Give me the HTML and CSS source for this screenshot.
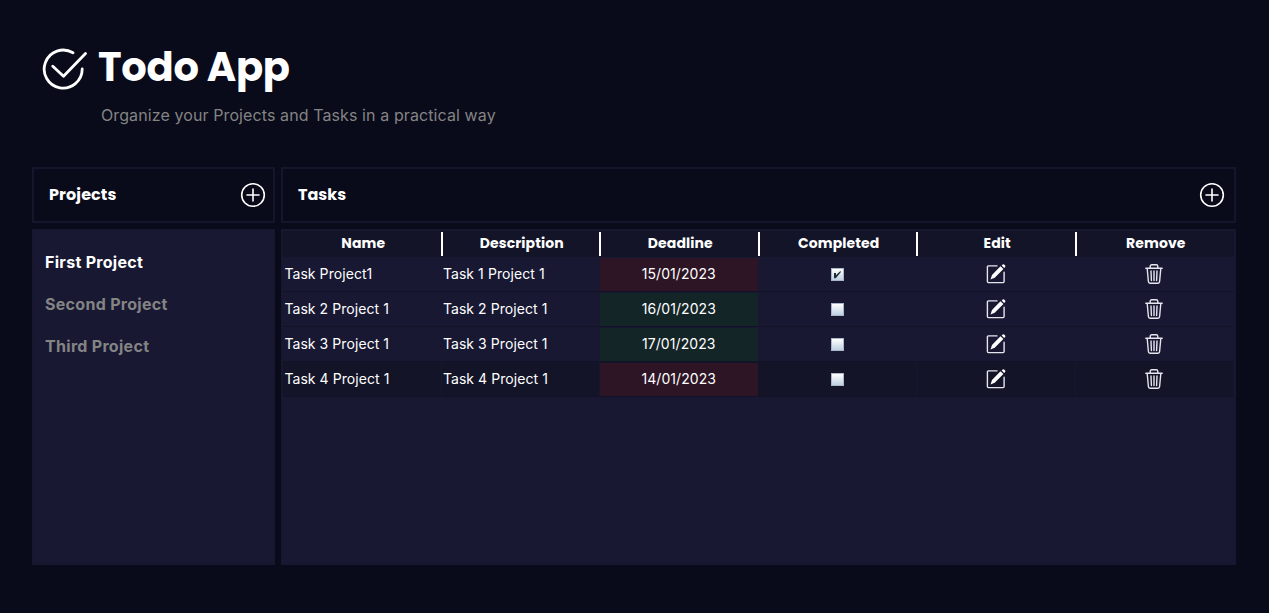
FILE: index.html
```html
<!DOCTYPE html>
<html lang="en">
<head>
<meta charset="utf-8">
<title>Todo App</title>
<link rel="stylesheet" href="styles.css">
</head>
<body>
<svg class="sprite" width="0" height="0">
  <symbol id="add" viewBox="0 0 26 26"><circle cx="13" cy="13" r="11.3"/><path d="M13 7v12M7 13h12"/></symbol>
  <symbol id="edit" viewBox="0 0 20 20"><path d="M11 1.9H2.4Q1.4 1.9 1.4 2.9v14.7q0 1 1 1h14.7q1 0 1-1V8.2"/><path class="solid" d="M14.5 2.2l2.9 2.9L8.7 13.8 4.5 15.6l1.5-4.5zM15.7 1.6l1-1q.7-.6 1.4 0l1 1q.7.7 0 1.4l-1 1z"/></symbol>
  <symbol id="trash" viewBox="0 0 18 20"><path d="M.8 4.2h16.4M5.2 4V2.4Q5.2.8 6.8.8h4.4q1.6 0 1.6 1.6V4M2.2 4.5l1.2 13q.1 1.7 1.7 1.7h7.8q1.6 0 1.7-1.7l1.2-13M6 7l.4 9.5M9 7v9.5M12 7l-.4 9.5"/></symbol>
</svg>
<header class="brand">
  <svg class="logo" viewBox="0 0 46 44"><path d="M31 4.8A19 19 0 1 0 40.2 21M10.8 18.3L21.5 28.3 43.5 5.5"/></svg>
  <div>
    <h1>Todo App</h1>
    <p>Organize your Projects and Tasks in a practical way</p>
  </div>
</header>
<main class="board">
  <section class="bar"><h2 class="projects-title">Projects</h2><svg class="add"><use href="#add"/></svg></section>
  <section class="bar wide"><h2>Tasks</h2><svg class="add"><use href="#add"/></svg></section>
  <ul class="projects">
    <li class="active">First Project</li>
    <li>Second Project</li>
    <li>Third Project</li>
  </ul>
  <section class="tasks">
    <div class="row head"><span>Name</span><span>Description</span><span>Deadline</span><span>Completed</span><span>Edit</span><span>Remove</span></div>
    <div class="row"><span>Task Project1</span><span>Task 1 Project 1</span><span class="date late">15/01/2023</span><span class="mid"><i class="check"><svg viewBox="0 0 13 13"><path d="M3 5h2v2.2L9.6 2.8v1.7L4.8 10.2H3z"/></svg></i></span><span class="mid"><svg class="edit"><use href="#edit"/></svg></span><span class="mid"><svg class="trash"><use href="#trash"/></svg></span></div>
    <div class="row"><span>Task 2 Project 1</span><span>Task 2 Project 1</span><span class="date soon">16/01/2023</span><span class="mid"><i class="check"></i></span><span class="mid"><svg class="edit"><use href="#edit"/></svg></span><span class="mid"><svg class="trash"><use href="#trash"/></svg></span></div>
    <div class="row"><span>Task 3 Project 1</span><span>Task 3 Project 1</span><span class="date soon">17/01/2023</span><span class="mid"><i class="check"></i></span><span class="mid"><svg class="edit"><use href="#edit"/></svg></span><span class="mid"><svg class="trash"><use href="#trash"/></svg></span></div>
    <div class="row dark"><span>Task 4 Project 1</span><span>Task 4 Project 1</span><span class="date late">14/01/2023</span><span class="mid"><i class="check"></i></span><span class="mid"><svg class="edit"><use href="#edit"/></svg></span><span class="mid"><svg class="trash"><use href="#trash"/></svg></span></div>
  </section>
</main>
</body>
</html>
```
FILE: styles.css
```css
* { box-sizing: border-box; margin: 0; padding: 0; }
body { height: 613px; overflow: hidden; background: #090a1a; color: #fff; font-family: Inter, "Liberation Sans", sans-serif; }
svg { fill: none; stroke: #fff; stroke-linecap: round; stroke-linejoin: round; display: block; }
.sprite { position: absolute; }
.solid { fill: #fff; stroke: none; }
.brand { height: 167px; padding: 47px 0 0 42px; display: flex; }
.logo { width: 46px; height: 44px; stroke-width: 2.8; margin: 1px 10px 0 0; flex: none; }
h1 { font: 700 40px/40px Poppins, Inter, sans-serif; letter-spacing: -0.3px; white-space: nowrap; }
.brand p { font-size: 16px; line-height: 20px; margin: 18px 0 0 3px; color: #848484; letter-spacing: 0.1px; white-space: nowrap; }
.board { width: 1204px; margin-left: 32px; display: grid; grid-template-columns: 243px 955px; grid-template-rows: 56px 336px; gap: 6px; }
.bar { border: 2px solid #15162b; display: flex; align-items: center; justify-content: space-between; padding: 0 7px 0 15px; }
.wide { padding-right: 9px; }
.bar h2 { font: 700 16px/20px Poppins, Inter, sans-serif; margin-top: -1px; }
.bar .projects-title { letter-spacing: 0.1px; }
.add { width: 26px; height: 26px; stroke-width: 1.6; }
.projects { background: #181832; border: 2px solid #171830; list-style: none; padding: 10px 11px; }
.projects li { height: 42px; line-height: 42px; font-size: 16px; font-weight: 700; letter-spacing: 0.3px; color: #848484; }
.projects .active { color: #fff; }
.tasks { background: #181832; border: 2px solid #17182f; }
.row { height: 35px; display: grid; grid-template-columns: repeat(6, 158.5px); font-size: 14px; line-height: 33px; letter-spacing: 0.07px; border-bottom: 1px solid #131327; }
.row > span { padding-left: 1.4px; white-space: nowrap; }
.row .date { text-align: center; margin: 1px 1px 0 0; line-height: 32px; padding: 0; }
.late { background: #2d1525; }
.soon { background: #142528; }
.row .mid { display: flex; align-items: center; justify-content: center; padding: 0; }
.head { height: 26px; background: #131427; font: 700 14px/23px Poppins, Inter, sans-serif; letter-spacing: 0.1px; border: 0; }
.head > span { text-align: center; padding: 0 0 0 2px; margin: 1px -1px 1px 1px; border-right: 2px solid #fff; }
.head > span:last-child { border: 0; padding: 0; }
.dark { background: #131427; }
.dark > span { box-shadow: inset -1px 0 #171830; }
.dark > .date { box-shadow: none; }
.check { width: 13px; height: 13px; border: 1px solid #a9b7c7; background: linear-gradient(#fff, #bfd0e2); margin: 1px 1px 0 0; }
.check svg { width: 13px; height: 13px; margin: -1px; fill: #222c38; stroke: none; }
.edit { width: 20px; height: 20px; stroke-width: 1.4; stroke: #e5e5ef; }
.trash { width: 18px; height: 20px; stroke-width: 1.4; stroke: #e5e5ef; margin-right: 1px; }
```
